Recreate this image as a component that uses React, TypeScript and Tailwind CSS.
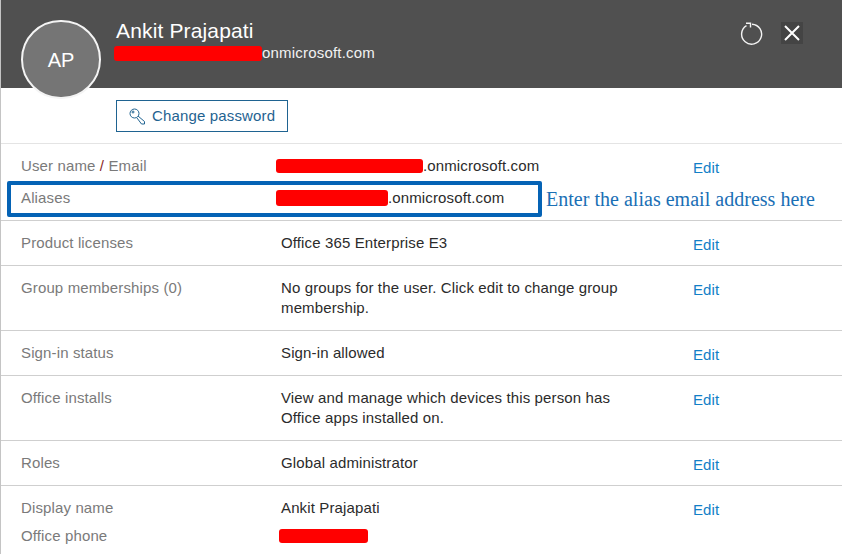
import { ReactNode } from "react";

const font = "[font-family:'Liberation_Sans',Arial,sans-serif]";

function Redact({ className }: { className: string }) {
  return <span className={`inline-block rounded-[3px] bg-[#ff0000] ${className}`} />;
}

function Edit() {
  return <a className="block pt-[2px] text-[15px] leading-5 tracking-[0.1px] text-[#127fc7]">Edit</a>;
}

function Row({ label, value, height }: { label: string; value: ReactNode; height: string }) {
  return (
    <div className={`grid grid-cols-[260px_412px_1fr] border-t border-[#cfcfcf] pl-5 pt-[12px] tracking-[0.13px] ${height}`}>
      <div className="text-[15px] leading-5 text-[#7a7a7a]">{label}</div>
      <div className="text-[15px] leading-5 text-[#2b2b2b]">{value}</div>
      <Edit />
    </div>
  );
}

export default function App() {
  return (
    <div className={`relative h-[554px] w-[842px] overflow-hidden border-l border-[#c4c4c4] bg-white ${font}`}>
      {/* header */}
      <div className="flex h-[88px] justify-between bg-[#505050] pl-[115px] pr-[39px]">
        <div className="pt-[19px] text-white">
          <div className="text-[21px] leading-6 tracking-[0.15px]">Ankit Prajapati</div>
          <div className="flex h-[20px] items-center text-[15px] tracking-[0.2px] text-[#f2f2f2]">
            <Redact className="-ml-[2px] h-[15px] w-[148px]" />
            onmicrosoft.com
          </div>
        </div>
        <div className="flex items-start gap-[18px] pt-[22px]">
          <svg width="24" height="24" viewBox="0 0 24 24" fill="none" stroke="#f4f4f4" strokeWidth="1.4">
            <path d="M7.5 3.6 A10 10 0 1 0 13 2.2" />
            <path d="M11.5 5.5 V1.2 H7" />
          </svg>
          <div className="flex h-[22px] w-[22px] items-center justify-center bg-[#444444]">
            <svg width="18" height="18" viewBox="0 0 18 18" fill="none" stroke="#ffffff" strokeWidth="2">
              <path d="M2 2 L16 16 M16 2 L2 16" />
            </svg>
          </div>
        </div>
      </div>

      {/* avatar sits over the header edge */}
      <div className="absolute left-[20px] top-[20px] flex h-[79px] w-[80px] items-center justify-center rounded-full border-2 border-[#f4f4f4] bg-[#757575] text-[20px] text-white">
        AP
      </div>

      <div className="flex h-[55px] items-start pl-[115px] pt-3">
        <button className="flex h-[32px] w-[172px] items-center gap-[6px] border border-[#1f6391] pl-3 text-[15px] tracking-[0.15px] text-[#1f6391]">
          <svg width="17" height="17" viewBox="0 0 17 17" fill="none" stroke="#1f6391" strokeWidth="1">
            <circle cx="5.5" cy="5.5" r="4.5" />
            <circle cx="4" cy="4" r="1" />
            <path d="M9 8 L15.5 13.5 V16 H12.5 L8 10" />
          </svg>
          Change password
        </button>
      </div>

      {/* user name and aliases */}
      <div className="h-[77px] border-t border-[#e4e4e4] pl-5 pt-[12px] tracking-[0.13px]">
        <div className="grid h-[32px] grid-cols-[260px_412px_1fr]">
          <div className="text-[15px] leading-5 text-[#7a7a7a]">
            User name <span className="text-[#8a1f1f]">/</span> Email
          </div>
          <div className="flex h-5 items-center text-[15px] text-[#2b2b2b]">
            <Redact className="-ml-[5px] h-[14px] w-[147px]" />
            .onmicrosoft.com
          </div>
          <Edit />
        </div>
        <div className="grid grid-cols-[260px_1fr]">
          <div className="text-[15px] leading-5 text-[#7a7a7a]">Aliases</div>
          <div className="flex h-5 items-center text-[15px] text-[#2b2b2b]">
            <Redact className="-ml-[5px] h-[16px] w-[112px]" />
            .onmicrosoft.com
          </div>
        </div>
      </div>

      {/* annotation drawn over the screenshot */}
      <div className="absolute left-[6px] top-[181px] h-[36px] w-[535px] rounded-[2px] border-4 border-[#0563b5]" />
      <div className="absolute left-[545px] top-[187px] text-[20px] leading-6 tracking-[0.02px] text-[#1a6fb5] [font-family:'Liberation_Serif',serif]">
        Enter the alias email address here
      </div>

      <Row label="Product licenses" value="Office 365 Enterprise E3" height="h-[45px]" />
      <Row
        label="Group memberships (0)"
        value={
          <>
            No groups for the user. Click edit to change group
            <br />
            membership.
          </>
        }
        height="h-[65px]"
      />
      <Row label="Sign-in status" value="Sign-in allowed" height="h-[45px]" />
      <Row
        label="Office installs"
        value={
          <>
            View and manage which devices this person has
            <br />
            Office apps installed on.
          </>
        }
        height="h-[65px]"
      />
      <Row label="Roles" value="Global administrator" height="h-[45px]" />
      <div className="border-t border-[#cfcfcf] pl-5 pt-[12px] tracking-[0.13px]">
        <div className="grid h-[28px] grid-cols-[260px_412px_1fr]">
          <div className="text-[15px] leading-5 text-[#7a7a7a]">Display name</div>
          <div className="text-[15px] leading-5 text-[#2b2b2b]">Ankit Prajapati</div>
          <Edit />
        </div>
        <div className="grid grid-cols-[260px_1fr]">
          <div className="text-[15px] leading-5 text-[#7a7a7a]">Office phone</div>
          <div className="flex h-5 items-center">
            <Redact className="-ml-[2px] h-[14px] w-[89px]" />
          </div>
        </div>
      </div>
    </div>
  );
}
